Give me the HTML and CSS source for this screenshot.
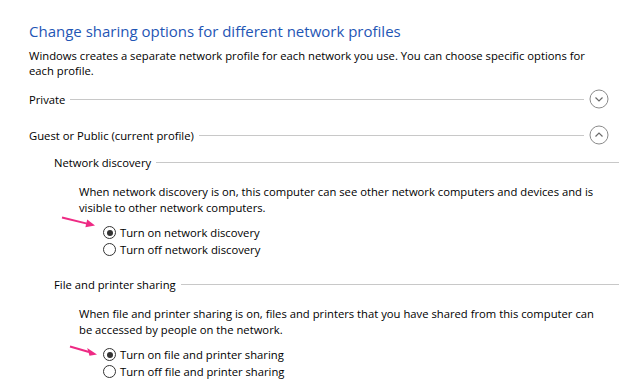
FILE: index.html
```html
<!DOCTYPE html>
<html lang="en">
<head>
  <meta charset="UTF-8">
  <title>Advanced sharing settings</title>
  <link rel="stylesheet" href="styles.css">
</head>
<body>
  <div class="page">
    <h1>Change sharing options for different network profiles</h1>
    <p class="intro">Windows creates a separate network profile for each network you use. You can choose specific options for each profile.</p>

    <div class="profile">
      <span class="label">Private</span>
      <span class="rule"></span>
      <svg class="toggle" width="20" height="20" viewBox="0 0 20 20"><circle cx="10" cy="10" r="9" fill="none" stroke="#8a8a8a"/><path d="M6.5 8.5 L10 12 L13.5 8.5" fill="none" stroke="#6a6a6a" stroke-width="1.2"/></svg>
    </div>

    <div class="profile">
      <span class="label">Guest or Public (current profile)</span>
      <span class="rule"></span>
      <svg class="toggle" width="20" height="20" viewBox="0 0 20 20"><circle cx="10" cy="10" r="9" fill="none" stroke="#8a8a8a"/><path d="M6.5 11.5 L10 8 L13.5 11.5" fill="none" stroke="#6a6a6a" stroke-width="1.2"/></svg>
    </div>

    <div class="section">
      <div class="section-head">
        <span class="label">Network discovery</span>
        <span class="rule"></span>
      </div>
      <p class="desc">When network discovery is on, this computer can see other network computers and devices and is visible to other network computers.</p>
      <div class="options">
        <label class="option"><span class="radio checked"></span>Turn on network discovery
          <svg class="arrow" width="36" height="14" viewBox="0 0 36 14"><path d="M1 2.5 L26 8.6" stroke="#ee2a84" stroke-width="2"/><path d="M26.2 4.5 L34 10.5 L24.4 12.3 Z" fill="#ee2a84"/></svg>
        </label>
        <label class="option"><span class="radio"></span>Turn off network discovery</label>
      </div>
    </div>

    <div class="section">
      <div class="section-head">
        <span class="label">File and printer sharing</span>
        <span class="rule"></span>
      </div>
      <p class="desc">When file and printer sharing is on, files and printers that you have shared from this computer can be accessed by people on the network.</p>
      <div class="options">
        <label class="option"><span class="radio checked"></span>Turn on file and printer sharing
          <svg class="arrow arrow-2" width="34" height="14" viewBox="0 0 34 14"><path d="M3 2.5 L22 8" stroke="#ee2a84" stroke-width="2"/><path d="M20.2 4.1 L30 10.5 L22.5 11.7 Z" fill="#ee2a84"/></svg>
        </label>
        <label class="option"><span class="radio"></span>Turn off file and printer sharing</label>
      </div>
    </div>
  </div>
</body>
</html>
```

FILE: styles.css
```css
body {
  margin: 0;
  background: #fff;
  font-family: "Open Sans", "Noto Sans", sans-serif;
  font-size: 11.25px;
  color: #000;
}
.page {
  padding: 19px 10px 0 29px;
}
h1 {
  margin: 0;
  font-size: 15px;
  font-weight: normal;
  color: #1f56b5;
  line-height: 24px;
}
.intro {
  margin: 5px 0 0;
  line-height: 15px;
}
.profile {
  display: flex;
  align-items: center;
  margin-top: 9px;
  height: 24px;
}
.profile + .profile {
  margin-top: 12px;
}
.rule {
  flex: 1;
  border-top: 1px solid #c8c8c8;
  margin: 1px 5px 0 5px;
}
.toggle {
  flex: none;
}
.section {
  margin-left: 25px;
  margin-right: -10px;
}
.section-head {
  display: flex;
  align-items: center;
  height: 18px;
  margin-top: 6px;
}
.section + .section .section-head {
  margin-top: 17px;
}
.section-head .rule {
  margin-right: 0;
}
.desc {
  margin: 13px 10px 0 25px;
  line-height: 16px;
}
.options {
  margin: 8px 0 0 49px;
}
.option {
  display: flex;
  align-items: center;
  position: relative;
  height: 17px;
}
.radio {
  width: 13px;
  height: 13px;
  border: 1px solid #333;
  border-radius: 50%;
  margin-right: 4px;
  box-sizing: border-box;
  position: relative;
}
.radio.checked::after {
  content: "";
  position: absolute;
  left: 2.5px;
  top: 2.5px;
  width: 6px;
  height: 6px;
  border-radius: 50%;
  background: #333;
}
.arrow {
  position: absolute;
  left: -42px;
  top: -9px;
}
.arrow-2 {
  left: -36px;
  top: -2px;
}
```
